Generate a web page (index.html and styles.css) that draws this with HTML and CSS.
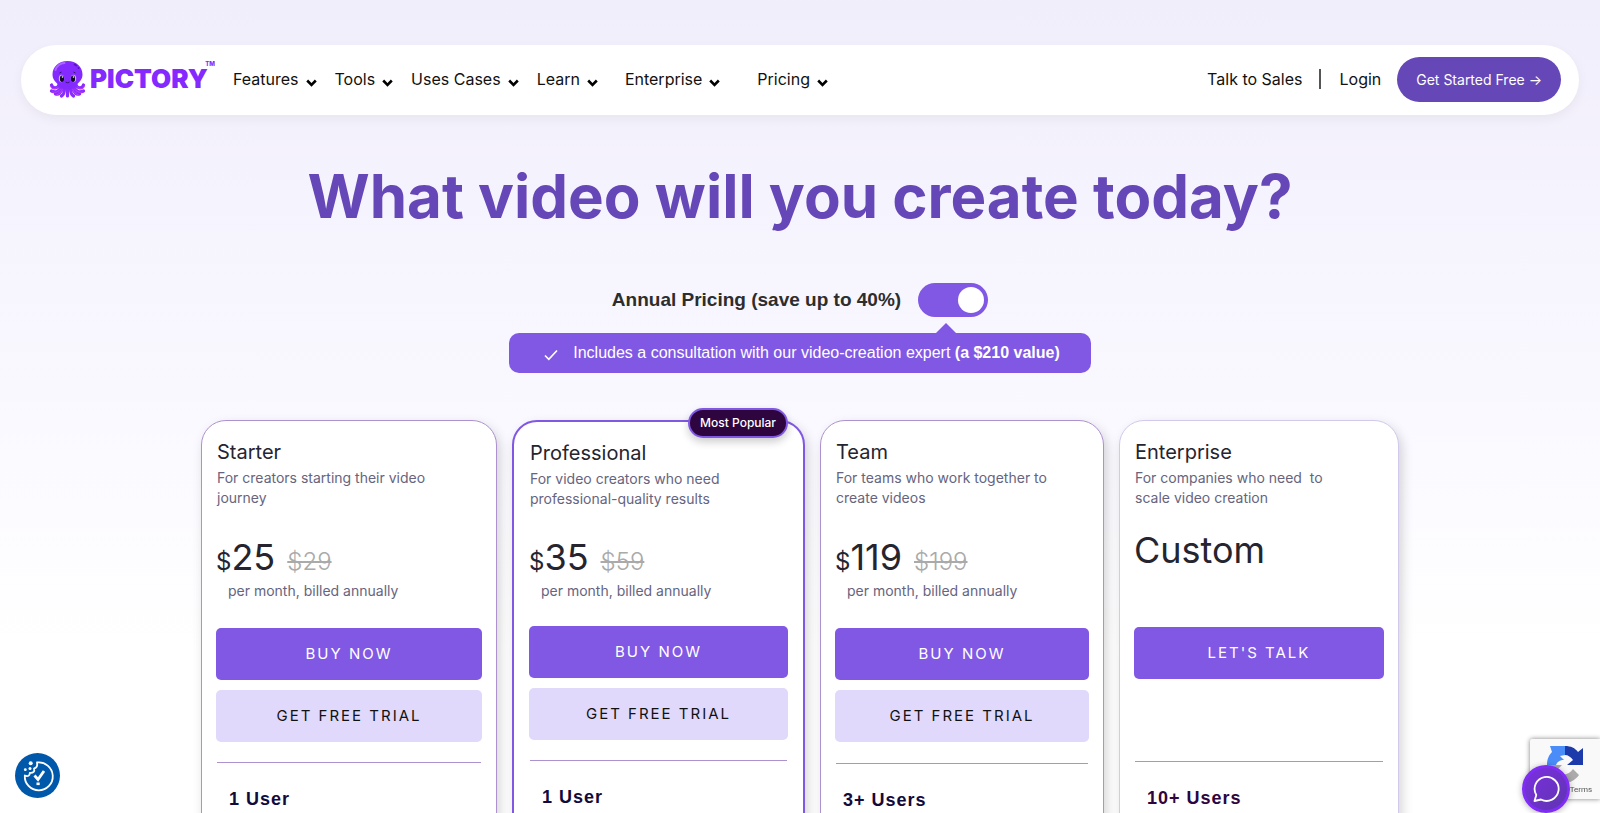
FILE: index.html
```html
<!DOCTYPE html>
<html lang="en">
<head>
<meta charset="utf-8">
<meta name="viewport" content="width=device-width, initial-scale=1">
<title>Pictory Pricing</title>
<link rel="stylesheet" href="styles.css">
</head>
<body>
<svg class="sprite" aria-hidden="true">
  <symbol id="chevron" viewBox="0 0 11 8"><path d="M1.200 1.500 5.500 5.800 9.800 1.500" fill="none" stroke="#000" stroke-width="2.600"/></symbol>
</svg>

<header class="navbar">
  <a class="logo" href="#" aria-label="Pictory">
    <svg class="logo-mark" viewBox="0 0 36 38" aria-hidden="true">
      <g fill="none" stroke="#8a2bff" stroke-width="3.2" stroke-linecap="round">
        <path d="M10 24C8 29 3 29 2 25"/><path d="M26 24c2 5 7 5 8 1"/>
        <path d="M12 26c-2 6-6 7-10 5"/><path d="M24 26c2 6 6 7 10 5"/>
        <path d="M13 27c-1 6-4 8-7 7"/><path d="M23 27c1 6 4 8 7 7"/>
        <path d="M15 28c0 5-1 7-3 8"/><path d="M21 28c0 5 1 7 3 8"/><path d="M18 28v8"/>
      </g>
      <g fill="none" stroke="#d44bf2" stroke-width=".7" stroke-linecap="round">
        <path d="M1 26c1 3 4 4 7 1M35 26c-1 3-4 4-7 1M3 32c3 1 6 0 8-3M33 32c-3 1-6 0-8-3M7 35c3-1 5-3 6-6M29 35c-3-1-5-3-6-6"/>
      </g>
      <path d="M18 1C9 1 3 7 3 14.500c0 5 3 7 5 9.500 2 4 5 5 10 5s8-1 10-5c2-2.500 5-4.500 5-9.500C33 7 27 1 18 1Z" fill="#842aff"/>
      <path d="M6 10c1-4 5-7 9-7" fill="none" stroke="#a966ff" stroke-width="2" stroke-linecap="round"/>
      <ellipse cx="26" cy="5" rx="2" ry="1" fill="#5a12bd" transform="rotate(30 26 5)"/><circle cx="29" cy="8" r="1" fill="#5a12bd"/>
      <ellipse cx="12" cy="18.500" rx="2.700" ry="3.800" fill="#c9b5e8"/><ellipse cx="24" cy="18.500" rx="2.700" ry="3.800" fill="#c9b5e8"/>
      <ellipse cx="12.500" cy="18.800" rx="2.100" ry="3.200" fill="#150a26"/><ellipse cx="23.500" cy="18.800" rx="2.100" ry="3.200" fill="#150a26"/>
      <circle cx="13" cy="17" r=".8" fill="#fff"/><circle cx="24" cy="17" r=".8" fill="#fff"/>
      <path d="M10 13l2-1M26 13l-2-1M16 22q2 1.500 4 0" fill="none" stroke="#33106b" stroke-width=".9"/>
    </svg>
    <span class="logo-word">PICTORY</span><span class="logo-tm">TM</span>
  </a>
  <nav class="menu" aria-label="Main">
    <a href="#">Features <svg class="chev"><use href="#chevron"/></svg></a>
    <a href="#">Tools <svg class="chev"><use href="#chevron"/></svg></a>
    <a href="#">Uses Cases <svg class="chev"><use href="#chevron"/></svg></a>
    <a href="#">Learn <svg class="chev"><use href="#chevron"/></svg></a>
    <a class="menu-enterprise" href="#">Enterprise <svg class="chev"><use href="#chevron"/></svg></a>
    <a class="menu-pricing" href="#">Pricing <svg class="chev"><use href="#chevron"/></svg></a>
  </nav>
  <div class="account">
    <a href="#">Talk to Sales</a>
    <span class="divider"></span>
    <a href="#">Login</a>
    <a class="cta" href="#">Get Started Free →</a>
  </div>
</header>

<main>
  <h1>What video will you create today?</h1>

  <div class="billing">
    <label for="annual">Annual Pricing (save up to 40%)</label>
    <input class="switch" type="checkbox" role="switch" id="annual" checked>
  </div>
  <p class="note">
    <svg class="note-check" viewBox="0 0 14 12" aria-hidden="true"><path d="M1 6.500 4.800 10.300 13 1.500" fill="none" stroke="#fff" stroke-width="1.700"/></svg>
    <span>Includes a consultation with our video-creation expert <b>(a $210 value)</b></span>
  </p>

  <section class="plans">
    <article class="card">
      <h2>Starter</h2>
      <p class="desc">For creators starting their video journey</p>
      <p class="price"><span class="cur">$</span>25<s>$29</s></p>
      <p class="period">per month, billed annually</p>
      <div class="actions"><button class="btn">BUY NOW</button><button class="btn btn-light">GET FREE TRIAL</button></div>
      <hr>
      <h3>1 User</h3>
    </article>
    <article class="card featured">
      <span class="badge">Most Popular</span>
      <h2>Professional</h2>
      <p class="desc">For video creators who need professional-quality results</p>
      <p class="price"><span class="cur">$</span>35<s>$59</s></p>
      <p class="period">per month, billed annually</p>
      <div class="actions"><button class="btn">BUY NOW</button><button class="btn btn-light">GET FREE TRIAL</button></div>
      <hr>
      <h3>1 User</h3>
    </article>
    <article class="card team">
      <h2>Team</h2>
      <p class="desc">For teams who work together to create videos</p>
      <p class="price"><span class="cur">$</span>119<s>$199</s></p>
      <p class="period">per month, billed annually</p>
      <div class="actions"><button class="btn">BUY NOW</button><button class="btn btn-light">GET FREE TRIAL</button></div>
      <hr>
      <h3>3+ Users</h3>
    </article>
    <article class="card enterprise">
      <h2>Enterprise</h2>
      <p class="desc">For companies who need&nbsp; to scale video creation</p>
      <p class="price">Custom</p>
      <div class="actions"><button class="btn">LET'S TALK</button></div>
      <hr>
      <h3>10+ Users</h3>
    </article>
  </section>
</main>

<button class="cookie" aria-label="Cookie settings">
  <svg viewBox="0 0 45 45" aria-hidden="true">
    <circle cx="22.500" cy="22.500" r="22.500" fill="#0058ab"/>
    <path d="M22 9.500A14 14 0 1 1 9.800 22.500c3 1.400 5.200 0 5-2.600 3.600.4 5.200-1.700 4.200-4.400 2.600-.6 3.700-2.800 3-6Z" fill="none" stroke="#fff" stroke-width="1.800" stroke-linejoin="round"/>
    <path d="M19.500 22.500 23 26.500 29 18" fill="none" stroke="#fff" stroke-width="2.800"/>
    <path d="M21.500 29.500h3.200v2.600h-3.200z" fill="#fff"/>
    <circle cx="15.700" cy="10.200" r="2" fill="#fff"/><circle cx="10.300" cy="16.700" r="1.400" fill="#fff"/><circle cx="15" cy="15.500" r="1.500" fill="#fff"/>
  </svg>
</button>
<aside class="captcha">
  <svg viewBox="0 0 38 40" aria-hidden="true">
    <path d="M19 1v9l-5 1 4 4c-4 0-7 2-8 5H1C1 14 3 10 6 7L4 1Z" fill="#4a8df8"/>
    <path d="M19 1c6 0 10 2 13 6l5-4v17H21l6-5c-2-3-5-5-8-5Z" fill="#1c3aa9"/>
    <path d="M1 20h15l-5 5c4 7 12 5 16-1l6 6C25 41 11 40 5 31l-4 4Z" fill="#ababab"/>
  </svg>
  <span>Privacy - Terms</span>
</aside>
<button class="chat" aria-label="Open chat">
  <svg viewBox="0 0 28 28" aria-hidden="true"><path d="M2.500 26 4.300 20A12 12 0 1 1 9 24.500Z" fill="none" stroke="#fff" stroke-width="1.800" stroke-linejoin="round"/></svg>
</button>
</body>
</html>
```

FILE: styles.css
```css
* { box-sizing: border-box; }
body {
  margin: 0;
  height: 100vh;
  overflow: hidden;
  padding: 45px 21px 0;
  font-family: Inter, "Liberation Sans", sans-serif;
  color: #25242f;
  background: linear-gradient(#f1eefc 0, #f5f3fd 200px, #faf9ff 420px, #fff 650px);
}
h1, h2, h3, p { margin: 0; }
a { color: inherit; text-decoration: none; }
button { font: inherit; border: 0; padding: 0; cursor: pointer; }
.sprite { display: none; }

.navbar {
  display: flex;
  align-items: center;
  height: 70px;
  padding: 0 18px 2px 28px;
  border-radius: 35px;
  background: #fff;
  box-shadow: 0 4px 12px rgba(0, 0, 0, .05);
  font-size: 16px;
  color: #111;
}
.logo { position: relative; display: flex; align-items: center; width: 167px; color: #842aff; }
.logo-mark { flex: none; width: 37px; height: 38px; margin-right: 4px; }
.logo-word { font-size: 26px; font-weight: 900; line-height: 32px; }
.logo-tm { position: absolute; right: 1px; top: 0; font-size: 6px; font-weight: 800; line-height: 8px; }
.menu { display: flex; gap: 18px; margin-left: 17px; }
.menu a { display: flex; align-items: center; gap: 7px; }
.menu .menu-enterprise { margin-left: 9px; }
.menu .menu-pricing { margin-left: 19px; }
.chev { width: 11px; height: 8px; margin-top: 7px; }
.account { display: flex; align-items: center; margin-left: auto; }
.divider { width: 2px; height: 20px; margin: 0 18px 0 17px; background: #555; }
.cta {
  margin-left: 16px;
  padding: 0 19px;
  border-radius: 23px;
  background: #6647b8;
  color: #fff;
  font-size: 14px;
  line-height: 45px;
}

h1 {
  margin-top: 41px;
  margin-bottom: 47px;
  font-size: 60px;
  line-height: 80px;
  font-weight: 700;
  text-align: center;
  color: #6647b8;
}
.billing {
  display: flex;
  justify-content: center;
  align-items: center;
  gap: 17px;
  font: bold 19px/34px "Liberation Sans", Arial, sans-serif;
  color: #2d2d2d;
}
.switch {
  appearance: none;
  display: flex;
  align-items: center;
  justify-content: flex-end;
  width: 70px;
  height: 34px;
  margin: 0;
  padding: 4px;
  border-radius: 17px;
  background: #8058e4;
}
.switch::before { content: ""; width: 26px; height: 26px; border-radius: 50%; background: #fff; }
.switch:not(:checked) { justify-content: flex-start; background: #aaa; }
.note {
  position: relative;
  display: flex;
  align-items: center;
  width: fit-content;
  margin: 16px auto 0;
  padding: 0 31px 0 35px;
  border-radius: 10px;
  background: #8058e4;
  color: #fff;
  font: 16px/40px "Liberation Sans", Arial, sans-serif;
}
.note::before {
  content: "";
  position: absolute;
  top: -10px;
  right: 135px;
  border: 10px solid transparent;
  border-top: 0;
  border-bottom-color: #8058e4;
}
.note-check { width: 14px; height: 12px; margin: 4px 15px 0 0; }

.plans {
  display: grid;
  grid-template-columns: 296fr 293fr 284fr 280fr;
  gap: 15px;
  max-width: 1198px;
  margin: 47px auto 0;
}
.card {
  position: relative;
  padding: 19px 14px 60px;
  border: 1px solid #ae91cf;
  border-radius: 25px;
  background: #fff;
  box-shadow: 3px 5px 12px rgba(0, 0, 0, .17);
}
.card h2 { margin-left: 1px; font-size: 20px; line-height: 24px; font-weight: 400; }
.desc { margin: 4px 40px 0 1px; font-size: 14px; line-height: 20px; color: #66647e; }
.price { margin-top: 27px; font-size: 36px; line-height: 44px; }
.cur { font-size: 24px; line-height: 24px; }
.price s { margin-left: 12px; font-size: 24px; line-height: 24px; font-weight: 300; color: #aaa; }
.period { margin: 2px 0 0 12px; font-size: 14px; line-height: 20px; color: #66647e; }
.actions { display: grid; gap: 10px; margin-top: 27px; }
.btn {
  height: 52px;
  padding-bottom: 2px;
  border-radius: 5px;
  background: #8058e4;
  color: #fff;
  font-size: 15px;
  letter-spacing: 2px;
}
.btn-light { background: #e0d9fb; color: #111; }
.card hr { margin: 20px 1px 24px; border: 0; border-top: 1px solid #ae91cf; }
.card h3 {
  margin-left: 13px;
  font: bold 18px/24px "Liberation Sans", Arial, sans-serif;
  letter-spacing: 1px;
  color: #130a3c;
}
.featured { padding: 19px 15px 60px; border: 2px solid #8058e4; }
.featured .price { margin-top: 26px; }
.featured .actions { margin-top: 25px; }
.team hr { margin-top: 21px; }
.team h3 { margin-left: 8px; }
.enterprise { border-color: #d2c9ec; }
.enterprise .price { margin-top: 20px; }
.enterprise .actions { margin-top: 55px; }
.enterprise hr { margin-top: 82px; }
.enterprise h3 { color: #2e053f; }
.badge {
  position: absolute;
  top: -14px;
  right: 15px;
  padding: 0 10px;
  border: 2px solid #8058e4;
  border-radius: 15px;
  background: #2e053f;
  box-shadow: 0 4px 8px rgba(0, 0, 0, .2);
  color: #fff;
  font-size: 12px;
  font-weight: 500;
  line-height: 26px;
}

.cookie { position: fixed; left: 15px; bottom: 15px; width: 45px; height: 45px; background: none; }
.cookie svg { display: block; }
.captcha {
  position: fixed;
  right: 0;
  bottom: 14px;
  width: 70px;
  height: 60px;
  overflow: hidden;
  border-radius: 2px 0 0 2px;
  background: #f9f9f9;
  box-shadow: 0 0 5px #808080;
  display: flex;
  flex-direction: column;
  align-items: center;
  padding-top: 6px;
  font: 8px/10px Roboto, sans-serif;
  color: #555;
}
.captcha svg { width: 38px; height: 40px; flex: none; }
.captcha span { white-space: nowrap; }
.chat {
  position: fixed;
  right: 30px;
  bottom: 0;
  display: grid;
  place-items: center;
  width: 48px;
  height: 48px;
  border: 3px solid #7f2cf5;
  border-radius: 50%;
  background: linear-gradient(135deg, #7b2fe0, #5f35b0);
  box-shadow: 0 1px 6px rgba(0, 0, 0, .3);
}
.chat svg { width: 28px; height: 28px; }
```
